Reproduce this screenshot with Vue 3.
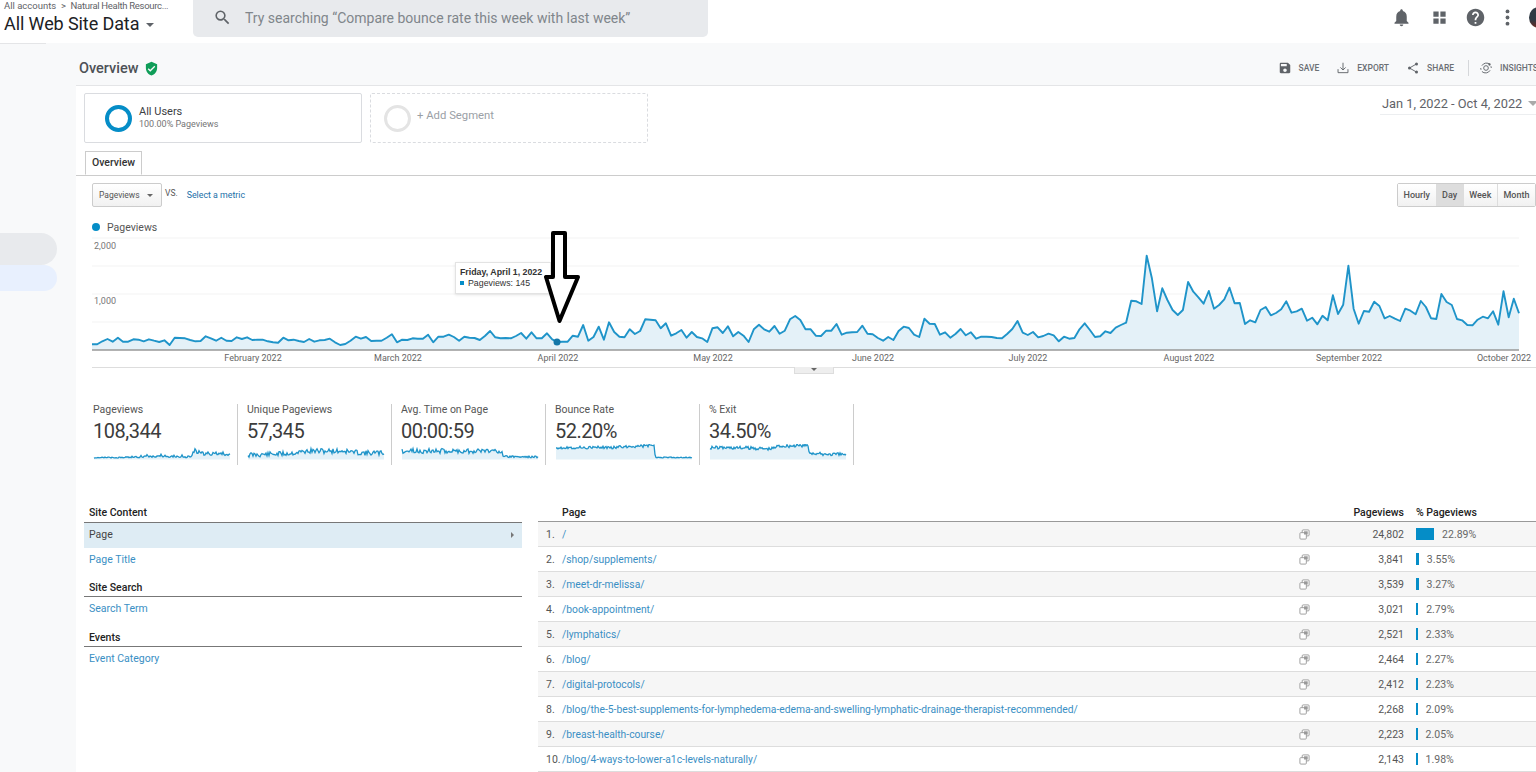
<template>
  <div class="app">
    <header class="topbar">
      <div class="account">
        <div class="crumbs">All accounts &nbsp;&gt;&nbsp; <span class="crumb-end">Natural Health Resourc...</span></div>
        <div class="view-name">All Web Site Data <span class="caret"></span></div>
      </div>
      <div class="search">
        <svg class="search-icon" viewBox="0 0 24 24"><path d="M15.5 14h-.79l-.28-.27A6.471 6.471 0 0 0 16 9.5 6.5 6.5 0 1 0 9.5 16c1.61 0 3.09-.59 4.23-1.57l.27.28v.79l5 4.99L20.49 19l-4.99-5zm-6 0C7.01 14 5 11.99 5 9.5S7.01 5 9.5 5 14 7.01 14 9.5 11.99 14 9.5 14z"/></svg>
        <span>Try searching “Compare bounce rate this week with last week”</span>
      </div>
      <div class="top-icons">
        <svg class="ticon bell" viewBox="0 0 24 24"><path d="M12 22c1.1 0 2-.9 2-2h-4c0 1.1.9 2 2 2zm6-6v-5c0-3.07-1.63-5.64-4.5-6.32V4c0-.83-.67-1.5-1.5-1.5s-1.5.67-1.5 1.5v.68C7.64 5.36 6 7.92 6 11v5l-2 2v1h16v-1l-2-2z"/></svg>
        <svg class="ticon apps" viewBox="0 0 24 24"><path d="M5 5h6v6H5zM13 5h6v6h-6zM5 13h6v6H5zM13 13h6v6h-6z"/></svg>
        <svg class="ticon help" viewBox="0 0 24 24"><path d="M12 2C6.48 2 2 6.48 2 12s4.48 10 10 10 10-4.48 10-10S17.52 2 12 2zm1 17h-2v-2h2v2zm2.07-7.75l-.9.92C13.45 12.9 13 13.5 13 15h-2v-.5c0-1.1.45-2.1 1.17-2.83l1.24-1.26c.37-.36.59-.86.59-1.41 0-1.1-.9-2-2-2s-2 .9-2 2H8c0-2.21 1.79-4 4-4s4 1.79 4 4c0 .88-.36 1.68-.93 2.25z"/></svg>
        <svg class="ticon dots" viewBox="0 0 24 24"><circle cx="12" cy="5" r="2.2"/><circle cx="12" cy="12" r="2.2"/><circle cx="12" cy="19" r="2.2"/></svg>
        <div class="avatar"></div>
      </div>
    </header>

    <div class="body">
      <aside class="sidebar">
        <div class="side-rule"></div>
        <div class="side-pill grey"></div>
        <div class="side-pill blue"></div>
      </aside>

      <main class="main">
        <div class="title-bar">
          <h1>Overview</h1>
          <svg class="shield" viewBox="0 0 24 24"><path d="M12 1L3 5v6c0 5.55 3.84 10.74 9 12 5.16-1.26 9-6.45 9-12V5l-9-4zm-2 16l-4-4 1.41-1.41L10 14.17l6.59-6.59L18 9l-8 8z"/></svg>
          <div class="actions">
            <span class="action">
              <svg viewBox="0 0 24 24"><path d="M17 3H5c-1.11 0-2 .9-2 2v14c0 1.1.89 2 2 2h14c1.1 0 2-.9 2-2V7l-4-4zm-5 16c-1.66 0-3-1.34-3-3s1.34-3 3-3 3 1.34 3 3-1.34 3-3 3zm3-10H5V5h10v4z"/></svg>
              SAVE
            </span>
            <span class="action">
              <svg viewBox="0 0 24 24" class="line"><path d="M12 3v12M7.5 11l4.5 4.5 4.500-4.500M3.500 14v6h17v-6"/></svg>
              EXPORT
            </span>
            <span class="action">
              <svg viewBox="0 0 24 24" class="line"><path d="M18 5L6 12l12 7"/><circle class="fill" cx="18" cy="5" r="2.600"/><circle class="fill" cx="6" cy="12" r="2.600"/><circle class="fill" cx="18" cy="19" r="2.600"/></svg>
              SHARE
            </span>
            <span class="action-sep"></span>
            <span class="action insights">
              <svg viewBox="0 0 24 24" class="line"><path d="M5 8a9 9 0 0 1 14-2M19 16a9 9 0 0 1-14 2M3 12a9 9 0 0 0 .500 3M21 12a9 9 0 0 0-.500-3"/><circle cx="12" cy="12" r="4"/><circle class="fill" cx="18" cy="6" r="2"/></svg>
              INSIGHTS
            </span>
          </div>
        </div>

        <div class="segments">
          <div class="segment">
            <span class="ring active"></span>
            <div>
              <div class="seg-name">All Users</div>
              <div class="seg-sub">100.00% Pageviews</div>
            </div>
          </div>
          <div class="segment add">
            <span class="ring"></span>
            <span class="seg-add">+ Add Segment</span>
          </div>
          <div class="date-range">Jan 1, 2022 - Oct 4, 2022 <span class="date-caret"></span></div>
        </div>

        <div class="tabs"><span class="tab">Overview</span></div>

        <div class="controls">
          <span class="select">Pageviews <span class="mini-caret"></span></span>
          <span class="vs">VS.</span>
          <a class="metric-link">Select a metric</a>
          <div class="range-btns">
            <span v-for="b in ranges" :key="b" class="range-btn" :class="{ on: b === 'Day' }">{{ b }}</span>
          </div>
        </div>

        <div class="legend"><span class="legend-dot"></span>Pageviews</div>

        <div class="chart">
          <svg class="chart-svg" width="1444" height="134" viewBox="0 0 1444 134">
            <line v-for="y in [4, 32, 60, 88]" :key="y" x1="0" x2="1427" :y1="y" :y2="y" class="grid-line" />
            <text x="2" y="15" class="axis-y">2,000</text>
            <text x="2" y="70" class="axis-y">1,000</text>
            <path :d="chartArea" class="area" />
            <path :d="chartLine" class="series" />
            <line x1="0" x2="1427" y1="116" y2="116" class="baseline" />
            <circle cx="465" cy="108" r="3.500" class="marker" />
            <text v-for="m in months" :key="m.label" :x="m.x" y="127" text-anchor="middle" class="axis-x">{{ m.label }}</text>
          </svg>
          <div class="tooltip">
            <div class="tip-date">Friday, April 1, 2022</div>
            <div class="tip-val"><span class="tip-key"></span>Pageviews: 145</div>
          </div>
          <svg class="arrow" width="40" height="96" viewBox="0 0 40 96">
            <path d="M10 2H22V46H35L16.500 90L3 46H10Z" />
          </svg>
          <div class="chart-toggle"><span class="mini-caret"></span></div>
        </div>

        <div class="metrics">
          <div v-for="m in metrics" :key="m.label" class="metric">
            <div class="metric-label">{{ m.label }}</div>
            <div class="metric-value">{{ m.value }}</div>
            <svg class="spark" width="138" height="16" viewBox="0 0 138 16">
              <path :d="m.area" class="area" />
              <path :d="m.line" class="spark-line" />
            </svg>
          </div>
        </div>

        <div class="report">
          <nav class="report-nav">
            <template v-for="g in navGroups" :key="g.title">
              <div class="nav-head">{{ g.title }}</div>
              <a v-for="item in g.items" :key="item" class="nav-item" :class="{ current: item === 'Page' }">
                {{ item }}
                <span v-if="item === 'Page'" class="nav-arrow"></span>
              </a>
            </template>
          </nav>

          <div class="table">
            <div class="row head">
              <span></span>
              <span>Page</span>
              <span></span>
              <span class="num">Pageviews</span>
              <span class="pct-head">% Pageviews</span>
            </div>
            <div v-for="(r, i) in rows" :key="r.page" class="row">
              <span class="idx">{{ i + 1 }}.</span>
              <a class="page-link">{{ r.page }}</a>
              <svg class="copy" viewBox="0 0 12 12">
                <rect x="3.500" y="1" width="7.500" height="6.500" rx="1" class="copy-back" />
                <rect x="1" y="4" width="7" height="7" rx="1" class="copy-front" />
                <rect x="5.500" y="2.500" width="4" height="3.500" class="copy-dot" />
              </svg>
              <span class="num">{{ r.views }}</span>
              <span class="pct">
                <i class="bar" :style="{ width: r.pct * 0.79 + 'px' }"></i>
                {{ r.pct.toFixed(2) }}%
              </span>
            </div>
          </div>
        </div>
      </main>
    </div>
  </div>
</template>

<script setup>
const ranges = ['Hourly', 'Day', 'Week', 'Month']

// line height above the axis per day, in thirds of a pixel
const daily = [
  17, 17, 26, 33, 25, 37, 25, 25, 32, 31, 26, 32, 28, 24, 29, 15, 37, 36, 35, 30, 26, 27, 41, 35, 28, 37, 28, 27, 38, 33,
  38, 30, 31, 31, 26, 23, 22, 37, 29, 31, 27, 24, 33, 25, 29, 30, 34, 23, 15, 18, 28, 40, 34, 39, 27, 28, 28, 37, 47, 23,
  31, 30, 35, 34, 34, 46, 23, 40, 40, 46, 39, 28, 40, 37, 36, 30, 42, 57, 38, 35, 36, 35, 42, 51, 34, 53, 35, 35, 50, 32,
  24, 25, 25, 43, 40, 75, 28, 39, 70, 31, 83, 54, 40, 38, 62, 48, 57, 92, 91, 89, 65, 80, 43, 50, 60, 37, 54, 39, 35, 24,
  65, 68, 51, 71, 41, 54, 43, 24, 62, 76, 62,
  55, 72, 49, 58, 92, 102, 90, 62, 62, 43, 42, 58, 58, 78, 46, 52, 53, 54, 73, 49, 47, 36, 28, 39, 30, 57, 70, 66, 46, 39,
  94, 79, 78, 46, 53, 37, 48, 63, 44, 53, 34, 40, 40, 39, 36, 35, 48, 63, 87, 52, 45, 54, 38, 42, 49, 44, 26, 40, 34, 36,
  62, 80, 60, 39, 41, 56, 51, 67, 75, 82, 148, 146, 138, 283, 215, 116, 185, 150, 120, 105, 120, 204, 175, 158, 139, 177,
  124, 135, 152, 187, 140, 141, 78, 89, 83, 120, 129, 104, 111, 122, 146, 112, 116, 124, 88, 97, 77, 103, 89, 164, 108, 136,
  253, 124, 79, 117, 115, 145, 132, 95, 102, 94, 87, 124, 118, 107, 147, 129, 95, 93, 168, 144, 135, 93, 89, 75, 74, 91,
  100, 95, 116, 76, 176, 98, 154, 110
]

const dayStep = 1427 / (daily.length - 1)
const chartPts = daily.map((h, i) => [i * dayStep, 116 - h / 3])

function toLine(pts) {
  return 'M' + pts.map(p => p[0].toFixed(1) + ' ' + p[1].toFixed(1)).join('L')
}
function toArea(pts, bottom) {
  return toLine(pts) + `L${pts[pts.length - 1][0].toFixed(1)} ${bottom}L${pts[0][0].toFixed(1)} ${bottom}Z`
}

const chartLine = toLine(chartPts)
const chartArea = toArea(chartPts, 116)

const months = [
  { label: 'February 2022', x: 161 },
  { label: 'March 2022', x: 306 },
  { label: 'April 2022', x: 466 },
  { label: 'May 2022', x: 621 },
  { label: 'June 2022', x: 781 },
  { label: 'July 2022', x: 936 },
  { label: 'August 2022', x: 1097 },
  { label: 'September 2022', x: 1257 },
  { label: 'October 2022', x: 1412 }
]

// small repeatable noise so the sparklines keep the same shape on every load
function noise(seed) {
  let s = seed
  return () => {
    s = (s * 9301 + 49297) % 233280
    return s / 233280 - 0.5
  }
}

// stops: [position 0..1, y], linear between them
function sparkPts(stops, amount, seed) {
  const rnd = noise(seed)
  const pts = []
  for (let i = 0; i <= 136; i++) {
    const t = i / 136
    let k = 0
    while (k < stops.length - 2 && t > stops[k + 1][0]) k++
    const [t0, y0] = stops[k]
    const [t1, y1] = stops[k + 1]
    const y = y0 + ((y1 - y0) * (t - t0)) / (t1 - t0)
    pts.push([i + 1, y + rnd() * amount * (y > 11 ? 0.4 : 1)])
  }
  return pts
}

const viewsPts = []
for (let i = 0; i <= 136; i++) {
  const h = daily[Math.round((i / 136) * (daily.length - 1))]
  viewsPts.push([i + 1, 15 - h / 21])
}

const metrics = [
  { label: 'Pageviews', value: '108,344', pts: viewsPts },
  { label: 'Unique Pageviews', value: '57,345', pts: sparkPts([[0, 11], [0.3, 9.5], [0.45, 7], [0.7, 7], [0.85, 9], [1, 9]], 5, 11) },
  { label: 'Avg. Time on Page', value: '00:00:59', pts: sparkPts([[0, 7], [0.5, 7], [0.73, 6.5], [0.74, 12.5], [1, 13]], 5, 23) },
  { label: 'Bounce Rate', value: '52.20%', pts: sparkPts([[0, 3.5], [0.4, 3.5], [0.7, 1.5], [0.72, 1.5], [0.73, 13.5], [1, 13.5]], 2.8, 37) },
  { label: '% Exit', value: '34.50%', pts: sparkPts([[0, 3.5], [0.3, 4], [0.45, 5], [0.5, 2], [0.72, 1.5], [0.73, 8.5], [0.8, 10], [1, 10.5]], 3.4, 41) }
].map(m => ({ ...m, line: toLine(m.pts), area: toArea(m.pts, 15.5) }))

const navGroups = [
  { title: 'Site Content', items: ['Page', 'Page Title'] },
  { title: 'Site Search', items: ['Search Term'] },
  { title: 'Events', items: ['Event Category'] }
]

const rows = [
  { page: '/', views: '24,802', pct: 22.89 },
  { page: '/shop/supplements/', views: '3,841', pct: 3.55 },
  { page: '/meet-dr-melissa/', views: '3,539', pct: 3.27 },
  { page: '/book-appointment/', views: '3,021', pct: 2.79 },
  { page: '/lymphatics/', views: '2,521', pct: 2.33 },
  { page: '/blog/', views: '2,464', pct: 2.27 },
  { page: '/digital-protocols/', views: '2,412', pct: 2.23 },
  { page: '/blog/the-5-best-supplements-for-lymphedema-edema-and-swelling-lymphatic-drainage-therapist-recommended/', views: '2,268', pct: 2.09 },
  { page: '/breast-health-course/', views: '2,223', pct: 2.05 },
  { page: '/blog/4-ways-to-lower-a1c-levels-naturally/', views: '2,143', pct: 1.98 }
]
</script>

<style>
html, body { margin: 0; background: #fff; overflow: hidden; }
</style>

<style scoped>
.app {
  width: 1536px;
  height: 772px;
  overflow: hidden;
  font-family: Roboto, "Liberation Sans", sans-serif;
  color: #3c4043;
  display: flex;
  flex-direction: column;
}

.topbar {
  height: 43px;
  flex: none;
  display: flex;
  align-items: flex-start;
  background: #fff;
  overflow: hidden;
}
.account { width: 193px; flex: none; padding-left: 4px; box-sizing: border-box; }
.crumbs { font-size: 9.5px; color: #5f6368; line-height: 11px; white-space: nowrap; }
.crumb-end { letter-spacing: -0.3px; }
.view-name { font-size: 18px; line-height: 24px; margin-top: 1px; color: #202124; white-space: nowrap; letter-spacing: -0.1px; }
.caret {
  display: inline-block;
  border: 4px solid transparent;
  border-top: 4px solid #5f6368;
  border-bottom: 0;
  margin-left: 2px;
  vertical-align: 3px;
}
.search {
  width: 515px;
  height: 37px;
  background: #e8eaed;
  border-radius: 0 0 5px 5px;
  display: flex;
  align-items: center;
  padding: 0 0 2px 20px;
  box-sizing: border-box;
  font-size: 14px;
  color: #80868b;
  white-space: nowrap;
}
.search-icon { width: 19px; height: 19px; fill: #5f6368; margin-right: 13px; flex: none; }
.top-icons {
  margin-left: auto;
  margin-right: -13px;
  display: flex;
  align-items: center;
  height: 34px;
}
.ticon { width: 21px; height: 21px; fill: #5f6368; flex: none; }
.apps { margin-left: 17px; }
.help { margin-left: 15px; }
.dots { margin-left: 11px; }
.avatar {
  width: 20px;
  height: 21px;
  margin-left: 11.5px;
  border-radius: 50%;
  background: linear-gradient(#2f3a44 60%, #6d2a22);
}

.body { flex: 1; display: flex; min-height: 0; }
.sidebar {
  width: 76px;
  flex: none;
  background: #f8f9fa;
  box-sizing: border-box;
}
.side-rule { width: 46px; height: 1px; background: #e4e5e7; margin-bottom: 189px; }
.side-pill { width: 57px; border-radius: 0 16px 16px 0; }
.side-pill.grey { height: 32px; background: #e8eaed; }
.side-pill.blue { height: 26px; background: #e8f0fe; }

.main { flex: 1; min-width: 0; background: #fff; overflow: hidden; }

.title-bar {
  height: 34px;
  background: #f8f9fa;
  border-bottom: 1px solid #e4e5e7;
  display: flex;
  align-items: center;
  padding: 8px 0 0 3px;
}
h1 { margin: 0; font-size: 14.5px; font-weight: 500; color: #4d5156; }
.shield { width: 15px; height: 15px; fill: #0f9d58; margin-left: 5px; }
.actions {
  margin-left: auto;
  margin-right: -2px;
  display: flex;
  align-items: center;
  height: 100%;
  font-size: 8.5px;
  font-weight: 500;
  color: #6b6f74;
}
.action { display: flex; align-items: center; gap: 7px; margin-left: 17px; white-space: nowrap; }
.action svg { width: 14px; height: 14px; fill: #5f6368; flex: none; }
.action svg.line { fill: none; stroke: #5f6368; stroke-width: 1.600; }
.action svg .fill { fill: #5f6368; stroke: none; }
.action-sep { width: 1px; height: 16px; background: #d5d7da; margin-left: 14px; }
.action.insights { margin-left: 10px; }

.segments { display: flex; align-items: flex-start; padding: 7px 0 0 8px; height: 50px; }
.segment {
  width: 278px;
  height: 50px;
  box-sizing: border-box;
  border: 1px solid #dadce0;
  border-radius: 2px;
  display: flex;
  align-items: center;
  padding-left: 20px;
  margin-right: 8px;
}
.segment.add { border: 1px dashed #dadce0; padding-left: 13px; }
.ring {
  width: 27px;
  height: 27px;
  box-sizing: border-box;
  border: 3.5px solid #e4e4e4;
  border-radius: 50%;
  margin-right: 6px;
  flex: none;
}
.ring.active { border-color: #058dc7; border-width: 4px; margin-right: 7px; }
.seg-name { font-size: 11px; color: #3c4043; line-height: 13px; }
.seg-sub { font-size: 9px; color: #757575; line-height: 13px; }
.seg-add { font-size: 11.3px; color: #9aa0a6; margin-top: -6px; }
.date-range {
  margin-left: auto;
  width: 156px;
  padding-left: 2px;
  box-sizing: border-box;
  height: 22px;
  line-height: 22px;
  border-bottom: 1px solid #eceef0;
  font-size: 12.8px;
  color: #5f6368;
  white-space: nowrap;
}
.date-caret {
  display: inline-block;
  border: 5px solid transparent;
  border-top: 5px solid #aaa;
  border-bottom: 0;
  margin-left: 2px;
  vertical-align: 2px;
}

.tabs { margin-top: 8px; height: 24px; border-bottom: 1px solid #ccc; padding-left: 9px; }
.tab {
  display: inline-block;
  height: 24px;
  width: 57px;
  box-sizing: border-box;
  border: 1px solid #ccc;
  border-bottom: 1px solid #fff;
  background: #fff;
  text-align: center;
  font-size: 10.5px;
  font-weight: 500;
  line-height: 22px;
  color: #333;
}

.controls { display: flex; align-items: flex-start; padding: 7px 0 0 16px; height: 24px; }
.select {
  width: 70px;
  height: 24px;
  box-sizing: border-box;
  border: 1px solid #ccc;
  border-radius: 2px;
  background: linear-gradient(#fff, #f1f1f1);
  font-size: 8.5px;
  line-height: 22px;
  padding-left: 6px;
  color: #555;
}
.mini-caret {
  display: inline-block;
  border: 3px solid transparent;
  border-top: 3px solid #666;
  border-bottom: 0;
  margin-left: 5px;
  vertical-align: 1px;
}
.vs { font-size: 8.500px; margin: 5px 0 0 3px; color: #555; }
.metric-link { font-size: 8.800px; margin: 7px 0 0 9px; color: #1a6fa8; }
.range-btns {
  margin-left: auto;
  display: flex;
  height: 24px;
  border: 1px solid #ccc;
  border-radius: 2px;
  box-sizing: border-box;
  width: 139px;
}
.range-btn {
  flex: auto;
  text-align: center;
  font-size: 9px;
  font-weight: 500;
  line-height: 22px;
  color: #555;
  background: linear-gradient(#fff, #f1f1f1);
  border-left: 1px solid #ddd;
}
.range-btn:first-child { border-left: 0; }
.range-btn.on { background: #ddd; }

.legend {
  margin-top: 12px;
  margin-bottom: -1px;
  padding-left: 16px;
  height: 16px;
  display: flex;
  align-items: center;
  font-size: 10.500px;
  color: #555;
}
.legend-dot { width: 8px; height: 8px; border-radius: 50%; background: #058dc7; margin-right: 7px; }

.chart { position: relative; margin-left: 16px; height: 134px; }
.chart-svg { display: block; }
.grid-line { stroke: #f3f3f3; stroke-width: 1; }
.axis-y { font-size: 9px; fill: #777; }
.axis-x { font-size: 9px; fill: #666; }
.area { fill: #e4f1f8; }
.series { fill: none; stroke: #1f94c9; stroke-width: 1.900; stroke-linejoin: round; }
.baseline { stroke: #999; stroke-width: 1.500; }
.marker { fill: #1477a8; }
.chart::after {
  content: '';
  position: absolute;
  left: 0;
  right: 0;
  top: 133px;
  height: 1px;
  background: #ddd;
}
.tooltip {
  position: absolute;
  left: 363px;
  top: 28px;
  width: 96px;
  height: 32px;
  box-sizing: border-box;
  background: #fff;
  border: 1px solid #e3e3e3;
  box-shadow: 0 1px 3px rgba(0, 0, 0, 0.1);
  padding: 4px 0 0 4px;
  font-family: "Liberation Sans", Arial, sans-serif;
  font-size: 8.800px;
  line-height: 11px;
  color: #333;
  white-space: nowrap;
}
.tip-date { font-weight: 700; }
.tip-val { font-weight: 400; }
.tip-key { display: inline-block; width: 4px; height: 4px; background: #058dc7; margin-right: 4px; vertical-align: 1px; }
.arrow { position: absolute; left: 451px; top: -3px; z-index: 2; }
.arrow path { fill: #fff; stroke: #000; stroke-width: 4; stroke-linejoin: round; }
.chart-toggle {
  position: absolute;
  z-index: 1;
  left: 702px;
  top: 133px;
  width: 40px;
  height: 7px;
  box-sizing: border-box;
  border: 1px solid #ddd;
  border-top: 0;
  background: #eee;
  text-align: center;
  line-height: 4px;
}
.chart-toggle .mini-caret { margin: 0; vertical-align: middle; }

.metrics { display: flex; margin: 36px 0 0 8px; height: 61px; }
.metric {
  width: 154px;
  box-sizing: border-box;
  padding-left: 9px;
  border-right: 1px solid #ccc;
}
.metric-label { font-size: 10.500px; line-height: 12px; color: #555; white-space: nowrap; }
.metric-value { font-size: 20px; line-height: 23px; margin-top: 4px; color: #3c3c3c; letter-spacing: -0.5px; }
.spark { display: block; margin-top: 1px; }
.spark-line { fill: none; stroke: #1f94c9; stroke-width: 1.300; }

.report { display: flex; margin: 40px 0 0 8px; gap: 16px; }
.report-nav { width: 438px; flex: none; }
.nav-head {
  height: 17px;
  line-height: 15px;
  padding-left: 5px;
  border-bottom: 1px solid #777;
  font-size: 10.500px;
  font-weight: 500;
  color: #222;
}
.nav-head:not(:first-child) { height: 16px; }
.nav-head:nth-of-type(3) { margin-top: 8px; }
.nav-item {
  display: block;
  position: relative;
  height: 25px;
  line-height: 24px;
  padding-left: 5px;
  font-size: 10.500px;
  color: #3a8fc4;
  margin-bottom: 7px;
}
.nav-item.current { background: #deecf4; color: #444; margin-bottom: 0; }
.nav-arrow {
  position: absolute;
  right: 8px;
  top: 9px;
  border: 3px solid transparent;
  border-left: 3px solid #777;
  border-right: 0;
}

.table { width: 998px; flex: none; }
.row {
  display: grid;
  grid-template-columns: 24px 737px 11px 94px 132px;
  align-items: center;
  height: 25px;
  box-sizing: border-box;
  border-bottom: 1px solid #ddd;
  font-size: 10.500px;
  white-space: nowrap;
}
.row:nth-child(even) { background: #f6f6f6; }
.row.head {
  height: 17px;
  align-items: start;
  line-height: 15px;
  background: #fff;
  border-bottom: 1px solid #999;
  font-weight: 500;
  color: #222;
}
.idx { padding-left: 8px; color: #555; }
.page-link { color: #3a8fc4; font-size: 10.300px; }
.copy { width: 11px; height: 11px; }
.copy-back { fill: #fff; stroke: #999; stroke-width: 1; }
.copy-front { fill: #fff; stroke: #999; stroke-width: 1; }
.copy-dot { fill: #999; }
.num { text-align: right; color: #555; }
.row.head .num { color: #222; }
.pct { padding-left: 12px; display: flex; align-items: center; gap: 8px; color: #666; }
.pct-head { padding-left: 12px; }
.bar { display: block; height: 12px; background: #058dc7; flex: none; }
</style>
